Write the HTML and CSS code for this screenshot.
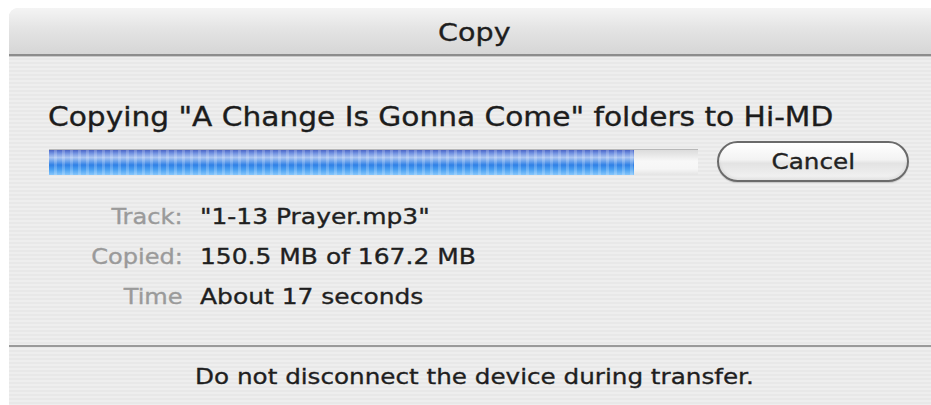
FILE: index.html
```html
<!DOCTYPE html>
<html lang="en">
<head>
<meta charset="utf-8">
<title>Copy</title>
<link rel="stylesheet" href="styles.css">
</head>
<body>
<div class="window">
  <div class="titlebar"><span class="title">Copy</span></div>
  <div class="content">
    <h1 class="heading"><span class="wide left">Copying "A Change Is Gonna Come" folders to Hi-MD</span></h1>
    <div class="progress-row">
      <div class="progress"><div class="progress-fill" style="width: 90.1%"></div></div>
      <button class="btn"><span class="wide center">Cancel</span></button>
    </div>
    <dl class="details">
      <dt><span class="wide right">Track:</span></dt><dd><span class="wide left">"1-13 Prayer.mp3"</span></dd>
      <dt><span class="wide right">Copied:</span></dt><dd><span class="wide left">150.5 MB of 167.2 MB</span></dd>
      <dt><span class="wide right">Time</span></dt><dd><span class="wide left">About 17 seconds</span></dd>
    </dl>
  </div>
  <div class="footer"><span class="wide center">Do not disconnect the device during transfer.</span></div>
</div>
</body>
</html>
```

FILE: styles.css
```css
html, body {
  margin: 0;
  padding: 0;
  background: #ffffff;
  overflow: hidden;
}

body {
  width: 931px;
  height: 405px;
  font-family: "DejaVu Sans", "Noto Sans", sans-serif;
}

/* the dialog face uses a broad, slightly heavy sans */
.wide {
  display: inline-block;
  white-space: nowrap;
  transform: scaleX(1.12);
  -webkit-text-stroke: 0.35px currentColor;
}
.wide.left { transform-origin: left center; }
.wide.right { transform-origin: right center; }
.wide.center { transform-origin: center center; }

.window {
  margin: 8px 0 0 9px;
  width: 930px;
  height: 397px;
  border-radius: 9px 9px 0 0;
  overflow: hidden;
  display: flex;
  flex-direction: column;
  background-color: #ececec;
  background-image: repeating-linear-gradient(to bottom, #eeeeee 0, #eeeeee 2px, #e8e8e8 2px, #e8e8e8 4px);
}

/* brushed title bar */
.titlebar {
  height: 46px;
  flex: none;
  display: flex;
  align-items: center;
  justify-content: center;
  background: linear-gradient(to bottom, #f4f4f4 0%, #e4e4e4 45%, #d6d6d6 100%);
  border-bottom: 2px solid #8c8c8c;
  box-shadow: 0 1px 0 #c8c8c8;
}

.title {
  font-size: 25.5px;
  color: #1e1e1e;
  padding-top: 2px;
  transform: scaleX(1.12);
  -webkit-text-stroke: 0.35px currentColor;
}

.content {
  flex: 1;
  padding: 46px 21px 0 39px;
}

.heading {
  margin: 0 0 9px;
  font-weight: normal;
  font-size: 26px;
  line-height: 30px;
  color: #1c1c1c;
}

.heading .wide {
  transform: scaleX(1.14);
}

.progress-row {
  display: flex;
  align-items: center;
  gap: 19px;
}

.progress {
  width: 649px;
  height: 26px;
  box-sizing: border-box;
  border-top: 1px solid #b8b8b8;
  background: linear-gradient(to bottom, #dcdcdc 0, #e8e8e8 20%, #f8f8f8 45%, #f6f6f6 75%, #e4e4e4 100%);
  margin-left: 1px;
}

.progress-fill {
  height: 100%;
  background-image:
    repeating-linear-gradient(to right, rgba(255,255,255,0) 0, rgba(255,255,255,0) 5px, rgba(255,255,255,0.2) 5px, rgba(255,255,255,0.2) 8px),
    linear-gradient(to bottom, #4a63c4 0, #6f8fe0 12%, #a9c4f2 30%, #6ea4ec 45%, #2f80e6 60%, #4aa0f2 78%, #86c6fb 100%);
}

.btn {
  width: 192px;
  height: 41px;
  box-sizing: border-box;
  border: 2px solid #6a6a6a;
  border-radius: 21px;
  background: linear-gradient(to bottom, #ffffff 0%, #f3f3f3 45%, #e3e3e3 55%, #f4f4f4 100%);
  box-shadow: inset 0 -2px 3px rgba(0,0,0,0.08), 0 1px 1px rgba(0,0,0,0.15);
  font-family: "DejaVu Sans", sans-serif;
  font-size: 22px;
  color: #222222;
  padding: 0 0 1px;
}

.details {
  margin: 14px 0 0;
  display: grid;
  grid-template-columns: 135px auto;
  column-gap: 17px;
  grid-auto-rows: 40px;
  align-items: center;
  font-size: 21.5px;
}

.details dt {
  text-align: right;
  color: #9a9a9a;
}

.details dd {
  margin: 0;
  color: #1f1f1f;
}

.details dd .wide {
  transform: scaleX(1.16);
}

.footer {
  height: 58px;
  flex: none;
  border-top: 2px solid #9a9a9a;
  display: flex;
  align-items: center;
  justify-content: center;
  font-size: 22px;
  color: #1e1e1e;
}
```
